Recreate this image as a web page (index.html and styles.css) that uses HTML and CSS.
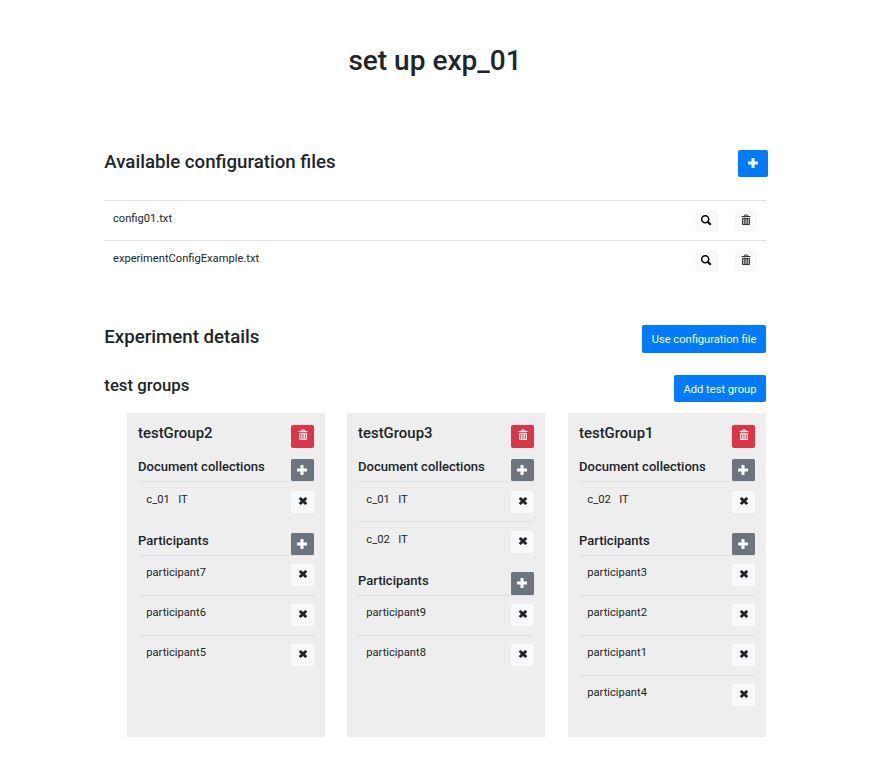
FILE: index.html
```html
<!DOCTYPE html>
<html lang="en">
<head>
<meta charset="utf-8">
<title>set up exp_01</title>
<link rel="stylesheet" href="styles.css">
</head>
<body>
<svg class="sprite" aria-hidden="true">
  <symbol id="plus" viewBox="0 0 12 12"><path d="M4.5 1h3v3.5H11v3H7.5V11h-3V7.5H1v-3h3.5z" fill="currentColor"/></symbol>
  <symbol id="cross" viewBox="0 0 12 12"><path d="M1.7 3.8 3.8 2 6 4.1 8.2 2l2.1 1.8L8.1 6l2.2 2.2L8.2 10 6 7.9 3.8 10 1.7 8.2 3.9 6z" fill="currentColor"/></symbol>
  <symbol id="search" viewBox="0 0 12 12"><circle cx="5.2" cy="5.2" r="3.5" fill="none" stroke="currentColor" stroke-width="1.5"/><path d="m7.7 7.7 3 3" stroke="currentColor" stroke-width="2"/></symbol>
  <symbol id="trash" viewBox="0 0 12 12"><path d="M2.5 4h7v6.5h-7z" fill="currentColor" fill-opacity=".3"/><path d="M1.5 2.5h9M4 2.5l.6-1.5h2.8L8 2.5M2.5 4.3v6.2h7V4.3zM4.8 4v6.5M7.2 4v6.5" fill="none" stroke="currentColor" stroke-width=".9"/></symbol>
</svg>
<main class="page">
  <h1>set up exp_01</h1>

  <header class="bar files-bar">
    <h2>Available configuration files</h2>
    <button class="btn primary add-file"><svg><use href="#plus"/></svg></button>
  </header>
  <ul class="files">
    <li><span>config01.txt</span><button class="btn light dark-icon"><svg><use href="#search"/></svg></button><button class="btn light bin"><svg><use href="#trash"/></svg></button></li>
    <li><span>experimentConfigExample.txt</span><button class="btn light dark-icon"><svg><use href="#search"/></svg></button><button class="btn light bin"><svg><use href="#trash"/></svg></button></li>
  </ul>

  <header class="bar details-bar">
    <h2>Experiment details</h2>
    <button class="btn primary use-file">Use configuration file</button>
  </header>
  <header class="bar groups-bar">
    <h3>test groups</h3>
    <button class="btn primary add-group">Add test group</button>
  </header>

  <div class="groups">
    <section class="card">
      <header class="card-head"><h4>testGroup2</h4><button class="btn danger"><svg><use href="#trash"/></svg></button></header>
      <header class="sub-head"><h5>Document collections</h5><button class="btn secondary"><svg><use href="#plus"/></svg></button></header>
      <ul class="rows docs">
        <li><span>c_01</span><span>IT</span><button class="btn light"><svg><use href="#cross"/></svg></button></li>
      </ul>
      <header class="sub-head"><h5>Participants</h5><button class="btn secondary"><svg><use href="#plus"/></svg></button></header>
      <ul class="rows people">
        <li><span>participant7</span><button class="btn light"><svg><use href="#cross"/></svg></button></li>
        <li><span>participant6</span><button class="btn light"><svg><use href="#cross"/></svg></button></li>
        <li><span>participant5</span><button class="btn light"><svg><use href="#cross"/></svg></button></li>
      </ul>
    </section>
    <section class="card">
      <header class="card-head"><h4>testGroup3</h4><button class="btn danger"><svg><use href="#trash"/></svg></button></header>
      <header class="sub-head"><h5>Document collections</h5><button class="btn secondary"><svg><use href="#plus"/></svg></button></header>
      <ul class="rows docs">
        <li><span>c_01</span><span>IT</span><button class="btn light"><svg><use href="#cross"/></svg></button></li>
        <li><span>c_02</span><span>IT</span><button class="btn light"><svg><use href="#cross"/></svg></button></li>
      </ul>
      <header class="sub-head tall"><h5>Participants</h5><button class="btn secondary"><svg><use href="#plus"/></svg></button></header>
      <ul class="rows people">
        <li><span>participant9</span><button class="btn light"><svg><use href="#cross"/></svg></button></li>
        <li><span>participant8</span><button class="btn light"><svg><use href="#cross"/></svg></button></li>
      </ul>
    </section>
    <section class="card">
      <header class="card-head"><h4>testGroup1</h4><button class="btn danger"><svg><use href="#trash"/></svg></button></header>
      <header class="sub-head"><h5>Document collections</h5><button class="btn secondary"><svg><use href="#plus"/></svg></button></header>
      <ul class="rows docs">
        <li><span>c_02</span><span>IT</span><button class="btn light"><svg><use href="#cross"/></svg></button></li>
      </ul>
      <header class="sub-head"><h5>Participants</h5><button class="btn secondary"><svg><use href="#plus"/></svg></button></header>
      <ul class="rows people">
        <li><span>participant3</span><button class="btn light"><svg><use href="#cross"/></svg></button></li>
        <li><span>participant2</span><button class="btn light"><svg><use href="#cross"/></svg></button></li>
        <li><span>participant1</span><button class="btn light"><svg><use href="#cross"/></svg></button></li>
        <li><span>participant4</span><button class="btn light"><svg><use href="#cross"/></svg></button></li>
      </ul>
    </section>
  </div>
</main>
</body>
</html>
```
FILE: styles.css
```css
* { box-sizing: border-box; }
body { margin: 0; background: #fff; color: #212529; font: 400 11.15px/17px Roboto, sans-serif; }
h1, h2, h3, h4, h5, ul { margin: 0; padding: 0; font-weight: 500; }
ul { list-style: none; font-weight: 400; }
.sprite { display: none; }
.page { width: 662px; margin-left: 104px; }
h1 { height: 150px; padding-top: 44px; font-size: 28px; line-height: 34px; text-align: center; }
h2 { padding-left: .3px; font-size: 18.67px; line-height: 24px; }
h3 { padding-left: .3px; font-size: 16.8px; line-height: 20px; }
h4 { font-size: 14.93px; line-height: 16px; }
h5 { font-size: 13.04px; line-height: 15px; }

.bar { display: flex; justify-content: space-between; align-items: flex-start; }
.files-bar { height: 50px; margin-right: -2px; }
.details-bar { height: 50px; }
.groups-bar { height: 38px; }

.btn { display: flex; align-items: center; justify-content: center; flex: none; width: 23px; height: 22px; padding: 0; border: 0; border-radius: 2px; font: inherit; color: #212529; }
.btn svg { width: 12px; height: 12px; }
.primary { background: #007bff; color: #fff; }
.danger { height: 23px; padding: 0 0 3px; background: #dc3545; color: #fff; }
.secondary { padding: 0 1px 1px 0; background: #6c757d; color: #fff; border-radius: 1.5px; }
.light { padding: 0 0 2px; background: #f8f9fa; }
.bin { padding: 0 0 2px 1px; }
.dark-icon { padding-right: 1px; color: #000; }
.add-file { width: 30px; height: 27px; padding: 0 1px 1px 0; }
.use-file { width: 124px; height: 28px; }
.add-group { width: 92px; height: 27px; padding-top: 1px; }

.files { height: 125px; }
.files li { display: flex; height: 40px; padding: 9px 9px 0; border-top: 1px solid #dee2e6; }
.files span { flex: 1; }
.files .btn + .btn { margin-left: 16px; }

.groups { display: grid; grid-template-columns: 220px 221px 198px; height: 324px; margin-left: 23px; }
.card { width: 198px; padding: 12px 11px 0; background: #eee; }
.card-head, .sub-head { display: flex; justify-content: space-between; }
.card-head { height: 34px; }
.sub-head { height: 22px; }
.sub-head.tall { height: 23px; margin-top: -1px; }
.tall h5 { padding-top: 1px; }
.tall .btn { height: 23px; }
.rows li { display: flex; height: 40px; padding: 9px 0 0 8.3px; border-top: 1px solid #dee2e6; }
.rows .btn { margin-left: auto; }
.docs { padding-bottom: 12px; }
.docs span + span { margin-left: 8.5px; }
.people li { padding-top: 8px; }
```
